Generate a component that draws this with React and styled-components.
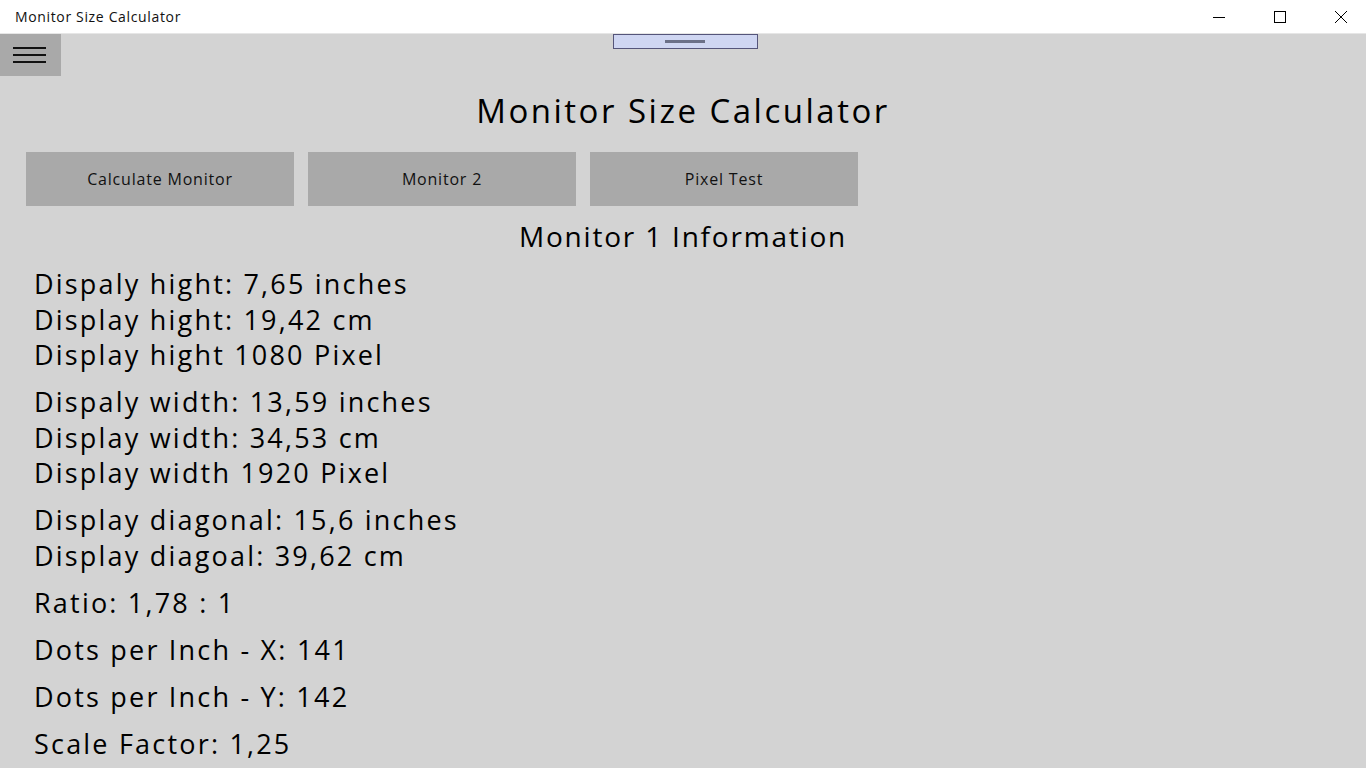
import React from 'react';
import styled, { createGlobalStyle } from 'styled-components';

const GlobalStyle = createGlobalStyle`
  html, body {
    margin: 0;
    padding: 0;
    background: #d3d3d3;
    font-family: "Open Sans", "Noto Sans", sans-serif;
    color: #000;
    overflow: hidden;
  }
`;

// Gruppen der Anzeige, wie sie in der App stehen
const infoGroups = [
  ['Dispaly hight: 7,65 inches', 'Display hight: 19,42 cm', 'Display hight 1080 Pixel'],
  ['Dispaly width: 13,59 inches', 'Display width: 34,53 cm', 'Display width 1920 Pixel'],
  ['Display diagonal: 15,6 inches', 'Display diagoal: 39,62 cm'],
  ['Ratio: 1,78 : 1'],
  ['Dots per Inch - X: 141'],
  ['Dots per Inch - Y: 142'],
  ['Scale Factor: 1,25'],
];

const tabs = ['Calculate Monitor', 'Monitor 2', 'Pixel Test'];

const App = () => {
  return (
    <Window>
      <GlobalStyle />
      <TitleBar>
        <WindowTitle>Monitor Size Calculator</WindowTitle>
        <Controls>
          <ControlButton aria-label="Minimize">
            <svg width="12" height="12" viewBox="0 0 12 12">
              <line x1="0" y1="6.5" x2="12" y2="6.5" stroke="#000" strokeWidth="1" />
            </svg>
          </ControlButton>
          <ControlButton aria-label="Maximize">
            <svg width="12" height="12" viewBox="0 0 12 12">
              <rect x="0.5" y="0.5" width="11" height="11" fill="none" stroke="#000" strokeWidth="1" />
            </svg>
          </ControlButton>
          <ControlButton aria-label="Close">
            <svg width="12" height="12" viewBox="0 0 12 12">
              <path d="M0 0 L12 12 M12 0 L0 12" stroke="#000" strokeWidth="1" />
            </svg>
          </ControlButton>
        </Controls>
      </TitleBar>

      <Content>
        <HeaderRow>
          <Hamburger aria-label="Menu">
            <span />
            <span />
            <span />
          </Hamburger>
          <DragHandle>
            <Grip />
          </DragHandle>
        </HeaderRow>

        <AppTitle>Monitor Size Calculator</AppTitle>

        <TabRow>
          {tabs.map((t) => (
            <TabButton key={t}>{t}</TabButton>
          ))}
        </TabRow>

        <SectionTitle>Monitor 1 Information</SectionTitle>

        <InfoList>
          {infoGroups.map((group, i) => (
            <InfoGroup key={i}>
              {group.map((line) => (
                <InfoLine key={line}>{line}</InfoLine>
              ))}
            </InfoGroup>
          ))}
        </InfoList>
      </Content>
    </Window>
  );
};

const Window = styled.div`
  width: 1366px;
  height: 768px;
  display: flex;
  flex-direction: column;
  background: #d3d3d3;
`;

const TitleBar = styled.div`
  height: 34px;
  flex-shrink: 0;
  background: #fff;
  display: flex;
  align-items: center;
  justify-content: space-between;
  border-bottom: 1px solid #e6e6e6;
  box-sizing: border-box;
`;

const WindowTitle = styled.div`
  padding-left: 15px;
  font-size: 14px;
  letter-spacing: 0.65px;
  color: #111;
  padding-bottom: 1px;
`;

const Controls = styled.div`
  display: flex;
  height: 100%;
`;

const ControlButton = styled.div`
  width: 61px;
  height: 100%;
  padding-left: 10px;
  box-sizing: border-box;
  display: flex;
  align-items: center;
  justify-content: center;
`;

const Content = styled.div`
  flex: 1;
  display: flex;
  flex-direction: column;
`;

const HeaderRow = styled.div`
  display: grid;
  grid-template-columns: 61px 1fr 61px;
  align-items: start;
`;

const Hamburger = styled.div`
  width: 61px;
  height: 42px;
  background: #a9a9a9;
  display: flex;
  flex-direction: column;
  justify-content: center;
  align-items: flex-start;
  gap: 5px;
  padding-left: 13px;
  box-sizing: border-box;

  span {
    display: block;
    width: 33px;
    height: 2px;
    background: #111;
  }
`;

const DragHandle = styled.div`
  justify-self: center;
  width: 145px;
  height: 15px;
  margin-left: 4px;
  background: #cfd6f2;
  border: 1px solid #55557a;
  box-sizing: border-box;
  display: flex;
  align-items: center;
  justify-content: center;
`;

const Grip = styled.div`
  width: 40px;
  height: 3px;
  background: #6b7088;
`;

const AppTitle = styled.h1`
  margin: 15px 0 0;
  font-weight: 400;
  font-size: 33px;
  line-height: 40px;
  letter-spacing: 2.5px;
  text-align: center;
`;

const TabRow = styled.div`
  display: flex;
  gap: 14px;
  padding-left: 26px;
  margin-top: 21px;
`;

const TabButton = styled.div`
  width: 268px;
  height: 54px;
  background: #a9a9a9;
  display: flex;
  align-items: center;
  justify-content: center;
  font-size: 16px;
  letter-spacing: 0.8px;
  color: #111;
`;

const SectionTitle = styled.h2`
  margin: 13px 0 0;
  font-weight: 400;
  font-size: 28px;
  line-height: 34px;
  letter-spacing: 1.8px;
  text-align: center;
`;

const InfoList = styled.div`
  margin-top: 13px;
  padding-left: 34px;
  display: flex;
  flex-direction: column;
  gap: 11.5px;
`;

const InfoGroup = styled.div`
  display: flex;
  flex-direction: column;
`;

const InfoLine = styled.div`
  font-size: 27px;
  line-height: 35.5px;
  letter-spacing: 2.2px;
  white-space: nowrap;
`;

export default App;
